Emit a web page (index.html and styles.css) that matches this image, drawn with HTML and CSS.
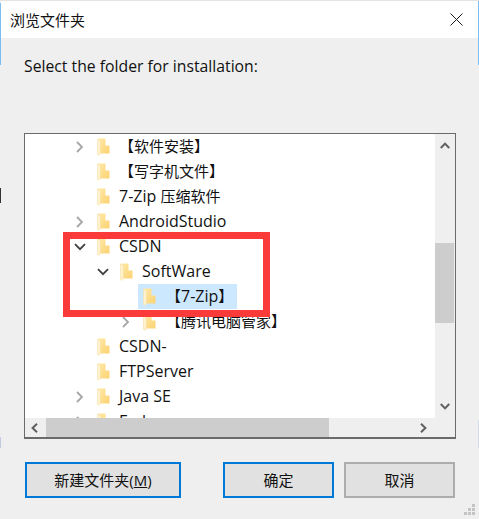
FILE: index.html
```html
<!DOCTYPE html>
<html lang="zh-CN">
<head>
    <meta charset="UTF-8">
    <title>浏览文件夹</title>
    <link rel="stylesheet" href="styles.css">
</head>
<body>
    <svg class="defs" width="0" height="0">
        <defs>
            <linearGradient id="folder-fill" x1="0" y1="0" x2="1" y2="1">
                <stop offset="0" stop-color="#ffe9a6" />
                <stop offset="1" stop-color="#fbd273" />
            </linearGradient>
            <symbol id="folder" viewBox="0 0 13 18">
                <path d="M1 .5H8.5V7.5H12.5V15.5H3z" fill="url(#folder-fill)" />
                <path d="M.5 1L3.5 2.5V15L2 17.5L.5 16.5z" fill="#fff2cc" stroke="#f6dd9c" stroke-width=".5" />
            </symbol>
            <symbol id="chev-right" viewBox="0 0 8 12">
                <path d="M1 1l5 5-5 5" fill="none" stroke="#a6a6a6" stroke-width="1.8" />
            </symbol>
            <symbol id="chev-down" viewBox="0 0 12 8">
                <path d="M1 1.2l5 5 5-5" fill="none" stroke="#404040" stroke-width="1.8" />
            </symbol>
        </defs>
    </svg>

    <div class="edge edge-left-top"></div>
    <div class="edge edge-left-bottom"></div>
    <div class="edge edge-left-text"></div>
    <div class="edge edge-right-top"></div>
    <div class="edge edge-right-bottom"></div>

    <div class="dialog">
        <div class="titlebar">
            <span class="title">浏览文件夹</span>
            <svg class="close" width="13" height="13" viewBox="0 0 13 13"><path d="M.5.5l12 12M12.5.5l-12 12" stroke="#1a1a1a" stroke-width="1" fill="none" /></svg>
        </div>
        <div class="body">
            <p class="prompt">Select the folder for installation:</p>

            <div class="listbox">
                <div class="tree">
                    <div class="row level-0"><svg class="chev"><use href="#chev-right" /></svg><svg class="icon"><use href="#folder" /></svg><span class="name cjk">【软件安装】</span></div>
                    <div class="row level-0"><span class="chev"></span><svg class="icon"><use href="#folder" /></svg><span class="name cjk">【写字机文件】</span></div>
                    <div class="row level-0"><span class="chev"></span><svg class="icon"><use href="#folder" /></svg><span class="name">7-Zip <span class="cjk">压缩软件</span></span></div>
                    <div class="row level-0"><svg class="chev"><use href="#chev-right" /></svg><svg class="icon"><use href="#folder" /></svg><span class="name">AndroidStudio</span></div>
                    <div class="row level-0"><svg class="chev"><use href="#chev-down" /></svg><svg class="icon"><use href="#folder" /></svg><span class="name">CSDN</span></div>
                    <div class="row level-1"><svg class="chev"><use href="#chev-down" /></svg><svg class="icon"><use href="#folder" /></svg><span class="name">SoftWare</span></div>
                    <div class="row level-2"><span class="chev"></span><div class="selected"><svg class="icon"><use href="#folder" /></svg><span class="name name-deep"><span class="cjk">【</span>7-Zip<span class="cjk">】</span></span></div></div>
                    <div class="row level-2"><svg class="chev"><use href="#chev-right" /></svg><svg class="icon"><use href="#folder" /></svg><span class="name name-deep cjk">【腾讯电脑管家】</span></div>
                    <div class="row level-0"><span class="chev"></span><svg class="icon"><use href="#folder" /></svg><span class="name">CSDN-</span></div>
                    <div class="row level-0"><span class="chev"></span><svg class="icon"><use href="#folder" /></svg><span class="name">FTPServer</span></div>
                    <div class="row level-0"><svg class="chev"><use href="#chev-right" /></svg><svg class="icon"><use href="#folder" /></svg><span class="name">Java SE</span></div>
                    <div class="row level-0"><svg class="chev"><use href="#chev-right" /></svg><svg class="icon"><use href="#folder" /></svg><span class="name">Fedora</span></div>
                </div>
                <div class="vscroll">
                    <svg class="arrow arrow-up" width="10" height="7" viewBox="0 0 10 7"><path d="M.8 6l4.2-4.4L9.200 6" fill="none" stroke="#606060" stroke-width="2" /></svg>
                    <div class="vtrack"><div class="vthumb"></div></div>
                    <svg class="arrow arrow-down" width="10" height="7" viewBox="0 0 10 7"><path d="M.8 1l4.200 4.400L9.200 1" fill="none" stroke="#606060" stroke-width="2" /></svg>
                </div>
                <div class="hscroll">
                    <svg class="arrow arrow-left" width="7" height="10" viewBox="0 0 7 10"><path d="M6 .8L1.600 5 6 9.200" fill="none" stroke="#606060" stroke-width="2" /></svg>
                    <div class="htrack"><div class="hthumb"></div></div>
                    <svg class="arrow arrow-right" width="7" height="10" viewBox="0 0 7 10"><path d="M1 .8L5.400 5 1 9.200" fill="none" stroke="#606060" stroke-width="2" /></svg>
                </div>
                <div class="corner"></div>
            </div>

            <div class="buttons">
                <button class="btn btn-new primary">新建文件夹(<u>M</u>)</button>
                <button class="btn btn-ok primary">确定</button>
                <button class="btn btn-cancel">取消</button>
            </div>
        </div>
        <svg class="grip" width="12" height="12" viewBox="0 0 12 12"><path d="M8 0h3v3H8zM4 4h3v3H4zM8 4h3v3H8zM0 8h3v3H0zM4 8h3v3H4zM8 8h3v3H8z" fill="#c4c4c4" /></svg>
    </div>

    <div class="highlight"></div>
</body>
</html>
```

FILE: styles.css
```css
html,
body {
    margin: 0;
    height: 100%;
}

body {
    width: 479px;
    height: 519px;
    overflow: hidden;
    position: relative;
    background-color: #efefef;
    font-family: 'Open Sans', 'Noto Sans CJK SC', sans-serif;
    color: #111;
}

.defs {
    position: absolute;
}

/* bits of the window behind the dialog */
.edge {
    position: absolute;
    width: 1px;
    z-index: 1;
}

.edge-left-top {
    left: 0;
    top: 3px;
    height: 62px;
    background-color: #79bdf2;
}

.edge-left-text {
    left: 0;
    top: 188px;
    height: 15px;
    background-color: #333;
}

.edge-left-bottom {
    left: 0;
    top: 437px;
    height: 11px;
    background-color: #c3c9dd;
}

.edge-right-top {
    right: 0;
    top: 1px;
    height: 64px;
    background-color: #79bdf2;
}

.edge-right-bottom {
    right: 0;
    top: 420px;
    height: 28px;
    background-color: #d5dbe5;
}

.dialog {
    height: 519px;
    display: flex;
    flex-direction: column;
    border-top: 1px solid #e4e4e4;
    box-sizing: border-box;
    padding: 0 1px;
    position: relative;
}

.titlebar {
    height: 37px;
    flex: none;
    display: flex;
    align-items: center;
    justify-content: space-between;
    background-color: #ffffff;
    padding: 0 15px 0 9px;
}

.title {
    font-size: 15px;
}

.body {
    flex: 1;
    padding: 0 23px;
}

.prompt {
    margin: 17px 0 0;
    font-size: 15.75px;
    line-height: 22px;
}

.listbox {
    margin-top: 56px;
    width: 432px;
    height: 306px;
    box-sizing: border-box;
    border: 1px solid #6b6b6b;
    border-width: 1px 1px 2px;
    display: grid;
    grid-template-columns: 410px 20px;
    grid-template-rows: 284px 19px;
    background-color: #ffffff;
}

.tree {
    overflow: hidden;
}

.row {
    height: 25px;
    display: flex;
    align-items: center;
    font-size: 16px;
    white-space: nowrap;
}

.level-0 {
    padding-left: 49px;
}

.level-1 {
    padding-left: 72px;
}

.level-2 {
    padding-left: 95px;
}

.chev {
    width: 12px;
    height: 12px;
    margin-right: 11px;
    flex: none;
}

.icon {
    width: 13px;
    height: 18px;
    flex: none;
}

.name {
    margin-left: 9px;
    margin-bottom: 2px;
}

.name-deep {
    margin-left: 10px;
}

.cjk {
    font-size: 15px;
}

.selected {
    height: 25px;
    width: 99px;
    margin-left: -5px;
    padding-left: 5px;
    box-sizing: border-box;
    display: flex;
    align-items: center;
    background-color: #cce8ff;
}

.vscroll {
    display: flex;
    flex-direction: column;
    align-items: center;
    background-color: #efefef;
}

.arrow {
    flex: none;
}

.arrow-up {
    margin: 8px 0 5px;
}

.arrow-down {
    margin: 5px 0 8px;
}

.vtrack {
    flex: 1;
    width: 100%;
    padding-top: 89px;
}

.vthumb {
    height: 80px;
    margin-right: 1px;
    background-color: #cdcdcd;
}

.hscroll {
    display: flex;
    align-items: center;
    background-color: #efefef;
}

.arrow-left {
    margin: 0 8px 0 6px;
}

.arrow-right {
    margin: 0 8px 0 6px;
}

.htrack {
    flex: 1;
    height: 100%;
}

.hthumb {
    width: 283px;
    height: 100%;
    background-color: #cdcdcd;
}

.corner {
    background-color: #efefef;
}

.buttons {
    display: flex;
    margin-top: 23px;
    margin-left: 1px;
}

.btn {
    height: 36px;
    box-sizing: border-box;
    background-color: #e1e1e1;
    border: 2px solid #adadad;
    font-family: inherit;
    font-size: 15px;
    color: #111;
    padding: 0 0 2px;
}

.primary {
    border-color: #0078d7;
}

.btn-new {
    width: 156px;
}

.btn-ok {
    width: 111px;
    margin-left: 42px;
}

.btn-cancel {
    width: 111px;
    margin-left: 10px;
}

.grip {
    position: absolute;
    right: 3px;
    bottom: 3px;
}

/* red annotation drawn over the screenshot */
.highlight {
    position: absolute;
    left: 63px;
    top: 232px;
    width: 207px;
    height: 85px;
    box-sizing: border-box;
    border: 7px solid #fb3a3a;
}
```
